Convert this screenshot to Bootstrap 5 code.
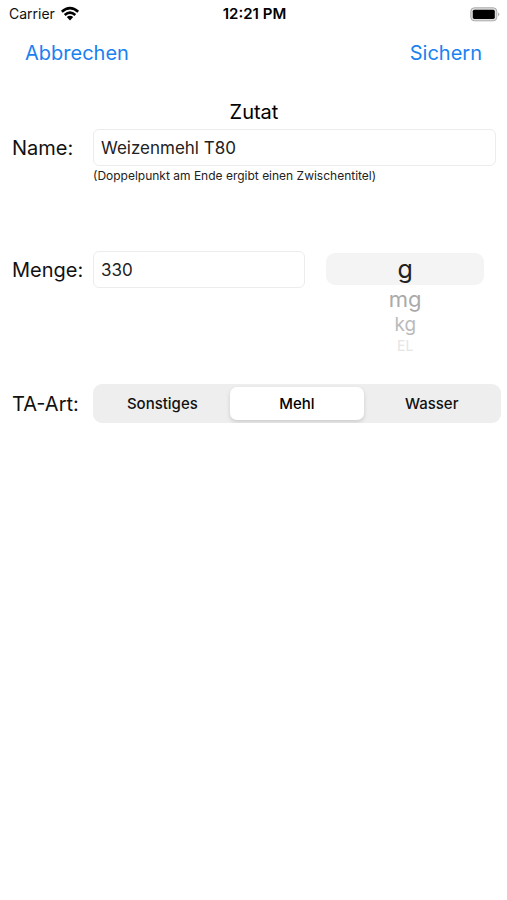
<!DOCTYPE html>
<html lang="de">
<head>
<meta charset="utf-8">
<meta name="viewport" content="width=device-width, initial-scale=1">
<title>Zutat</title>
<link href="https://cdn.jsdelivr.net/npm/bootstrap@5.3.0/dist/css/bootstrap.min.css" rel="stylesheet">
<style>
  body { font-family: Inter, "Liberation Sans", sans-serif; color: #111; background: #fff; }
  .status-bar { height: 28px; padding: 0 7px 0 9px; font-size: 14px; line-height: 20px; }
  .status-bar .clock { font-size: 15px; font-weight: 600; color: #000; }
  .toolbar { height: 50px; padding: 0 25px; }
  .toolbar .btn { font-size: 20px; line-height: 28px; color: #1a82f0; text-decoration: none; }
  .editor { padding: 22px 6px 0 12px; }
  .editor h1 { font-size: 20px; line-height: 24px; font-weight: 400; margin: 0 5px 5px 0; color: #000; }
  .caption { width: 81px; font-size: 20px; line-height: 38px; white-space: nowrap; }
  .field { height: 37px; padding: 0 7px; font-size: 17px; color: #222; border-color: #ececec; border-radius: 6px; }
  .hint { font-size: 12px; line-height: 18px; margin-left: 81px; color: #222; }
  .name-row { padding-right: 5px; }
  .amount-row { margin-top: 66px; padding-right: 17px; }
  .amount-row .amount { flex: 197 1 0; }
  .wheel { flex: 158 1 0; height: 102px; margin: 2px 0 0 21px; }
  .wheel label { width: 100%; text-align: center; cursor: pointer; color: #aaa; font-size: 22px; line-height: 28px; }
  .wheel .btn-check:checked + label { background: #f4f4f4; color: #222; border-radius: 9px; font-size: 25px; line-height: 32px; }
  .wheel .far { font-size: 19px; line-height: 24px; color: #bbb; }
  .wheel .edge { font-size: 14px; line-height: 18px; color: #e5e5e5; }
  .kind-row { margin-top: 29px; }
  .segments { height: 39px; padding: 3px 2px; background: #eee; border-radius: 9px; }
  .segments label { flex: 1 1 0; font-size: 15px; line-height: 33px; font-weight: 500; text-align: center; border-radius: 7px; cursor: pointer; }
  .segments .btn-check:checked + label { background: #fff; box-shadow: 0 2px 4px rgba(0,0,0,.14); color: #000; }
</style>
</head>
<body>
<header>
  <div class="status-bar d-flex align-items-center">
    <div class="col d-flex align-items-center gap-1">
      <span>Carrier</span>
      <svg width="22" height="16" viewBox="0 0 20 16" aria-hidden="true">
        <g fill="none" stroke="#000" stroke-width="2.6">
          <path d="M1.8 5.7Q10-1.4 18.2 5.7"/>
          <path d="M4.7 9Q10 4.4 15.3 9"/>
        </g>
        <path d="M6.8 11.1Q10 8.4 13.2 11.1L10 14.4Z"/>
      </svg>
    </div>
    <div class="clock">12:21 PM</div>
    <div class="col d-flex justify-content-end">
      <svg width="30" height="15" viewBox="0 0 30 15" aria-hidden="true">
        <rect x=".8" y=".8" width="26" height="13" rx="3.5" fill="#ddd" stroke="#aaa" stroke-width="1"/>
        <rect x="2.8" y="2.7" width="22" height="9.2" rx="1.6"/>
        <path d="M28.1 5.2Q30.5 7.3 28.1 9.4Z" fill="#aaa"/>
      </svg>
    </div>
  </div>
  <nav class="toolbar d-flex align-items-center justify-content-between">
    <button type="button" class="btn btn-link p-0 border-0">Abbrechen</button>
    <button type="button" class="btn btn-link p-0 border-0">Sichern</button>
  </nav>
</header>
<main>
  <form class="editor">
    <h1 class="text-center">Zutat</h1>
    <div class="name-row d-flex">
      <label class="caption flex-shrink-0" for="name">Name:</label>
      <input class="field form-control" id="name" type="text" value="Weizenmehl T80" aria-describedby="name-hint">
    </div>
    <div class="hint" id="name-hint">(Doppelpunkt am Ende ergibt einen Zwischentitel)</div>

    <div class="amount-row d-flex align-items-start">
      <label class="caption flex-shrink-0" for="amount">Menge:</label>
      <input class="field amount form-control" id="amount" type="text" inputmode="decimal" value="330">
      <div class="wheel d-flex flex-column" role="radiogroup" aria-label="Einheit">
        <input class="btn-check" type="radio" name="unit" id="unit-g" checked><label for="unit-g">g</label>
        <input class="btn-check" type="radio" name="unit" id="unit-mg"><label for="unit-mg">mg</label>
        <input class="btn-check" type="radio" name="unit" id="unit-kg"><label class="far" for="unit-kg">kg</label>
        <input class="btn-check" type="radio" name="unit" id="unit-el"><label class="edge" for="unit-el">EL</label>
      </div>
    </div>

    <div class="kind-row d-flex align-items-center">
      <span class="caption flex-shrink-0" id="kind">TA-Art:</span>
      <div class="segments d-flex flex-grow-1" role="radiogroup" aria-labelledby="kind">
        <input class="btn-check" type="radio" name="kind" id="kind-other"><label for="kind-other">Sonstiges</label>
        <input class="btn-check" type="radio" name="kind" id="kind-flour" checked><label for="kind-flour">Mehl</label>
        <input class="btn-check" type="radio" name="kind" id="kind-water"><label for="kind-water">Wasser</label>
      </div>
    </div>
  </form>
</main>
<script src="https://cdn.jsdelivr.net/npm/bootstrap@5.3.0/dist/js/bootstrap.bundle.min.js"></script>
</body>
</html>
